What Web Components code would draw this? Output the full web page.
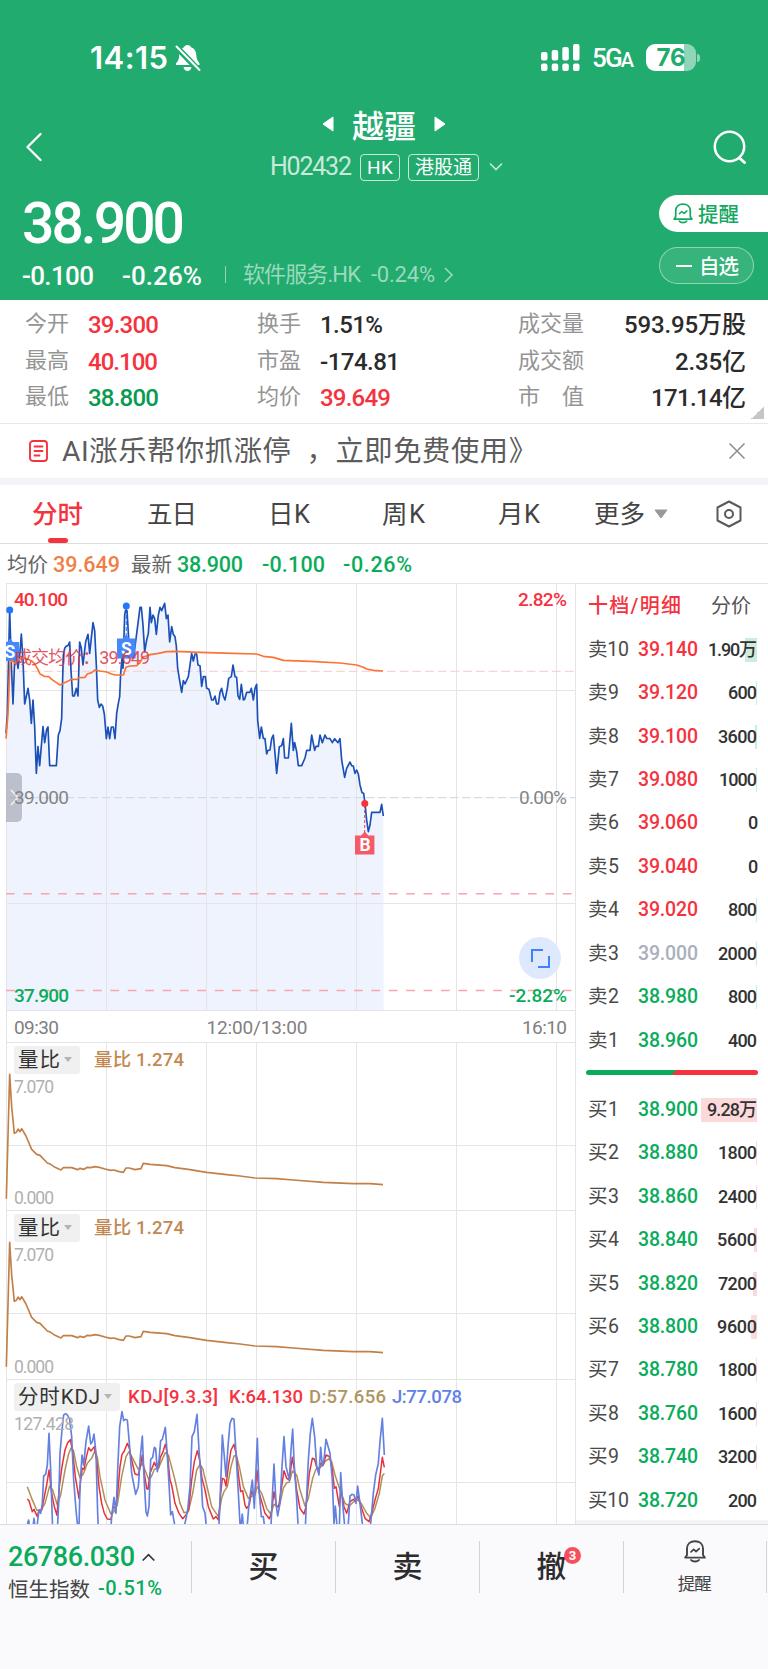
<!DOCTYPE html>
<html lang="zh-CN">
<head>
<meta charset="utf-8">
<title>越疆 H02432</title>
<style>
  body {
    margin: 0;
    width: 768px;
    height: 1669px;
    overflow: hidden;
    background: #fff;
    color: #333;
    font-family: Roboto, "Noto Sans CJK SC", sans-serif;
    --red: #f5333f;
    --green: #0aac5c;
    --line: #e4e4e6;
  }
  main { display: flex; height: 941px; }
</style>
</head>
<body>
<stock-header></stock-header>
<quote-stats></quote-stats>
<promo-banner>AI涨乐帮你抓涨停&nbsp; ，立即免费使用》</promo-banner>
<period-tabs></period-tabs>
<price-summary></price-summary>
<main>
  <stock-charts></stock-charts>
  <order-book></order-book>
</main>
<trade-bar></trade-bar>

<script>
/* base class: renders the html() of a component into an open shadow root */
class BaseElement extends HTMLElement {
  connectedCallback() {
    if (this.shadowRoot) return;
    this.attachShadow({ mode: 'open' });
    this.shadowRoot.innerHTML = this.html();
  }
}

/* bell with a small trend line inside, drawn in the current colour */
class BellIcon extends BaseElement {
  html() {
    return `
      <style>
        :host { display: block; width: 22px; height: 23px; }
        svg { display: block; width: 100%; height: 100%; }
      </style>
      <svg viewBox="0 0 22 23" fill="none" stroke="currentColor" stroke-width="1.9" stroke-linejoin="round" stroke-linecap="round">
        <path d="M1.2 17.6L3 15V8.6C3 4 6.4 1.2 11 1.2S19 4 19 8.6V15l1.8 2.6z"/>
        <path d="M7 20c1.6 2 6.4 2 8 0"/>
        <path d="M7 11.8l2.7-2.5 2.4 2.2 3.2-2.8" stroke-width="1.7"/>
      </svg>`;
  }
}
customElements.define('bell-icon', BellIcon);

class StatusBar extends BaseElement {
  html() {
    return `
      <style>
        :host { display: flex; align-items: center; height: 91px; padding: 12px 68px 0 90px; color: #fff; line-height: 1; }
        .time { font: 600 31px/1 Inter, sans-serif; }
        .bell { margin-left: 7px; margin-right: auto; }
        .net { font-size: 26px; font-weight: 500; margin-left: 12px; white-space: nowrap; }
        .net small { font-size: 20px; }
        .battery { display: flex; align-items: center; margin-left: 12px; }
        .level { width: 50px; height: 27px; border-radius: 9px; background: linear-gradient(90deg, #fff 38px, #90d5b7 38px); color: #21ab6e; font: 700 24px/27px Inter, sans-serif; text-align: center; }
        .nub { width: 3px; height: 8px; margin-left: 1px; border-radius: 0 3px 3px 0; background: #90d5b7; }
      </style>
      <fit-text class="time" width="78">14:15</fit-text>
      <svg class="bell" width="26" height="28" viewBox="0 0 26 28">
        <path d="M12.5 1c2 0 3 1 3.600 2.300 3.600 1.400 5 4.200 5.200 7.700.2 4.500 1.700 6 3.200 8.500V21H1v-1.500c2-2.500 3-4 3.200-8.500C4.500 7 6 4.700 8.900 3.300 9.500 2 10.500 1 12.500 1z" fill="#fff"/>
        <path d="M8.500 23h8c-.5 2.600-2 4-4 4s-3.500-1.400-4-4z" fill="#fff"/>
        <path d="M0 1.500L24.500 27" stroke="#21ab6e" stroke-width="6"/>
        <path d="M1.500 2.500L24.500 26" stroke="#fff" stroke-width="2" stroke-linecap="round"/>
      </svg>
      <svg width="39" height="28" viewBox="0 0 39 28" fill="#fff">
        <rect x="0" y="8" width="6.500" height="8.500" rx="2"/><rect x="10.700" y="6" width="6.500" height="10.500" rx="2"/>
        <rect x="21.300" y="3" width="6.500" height="13.500" rx="2"/><rect x="32" y="0" width="6.500" height="16.500" rx="2"/>
        <rect x="0" y="19.500" width="6.500" height="7.500" rx="2"/><rect x="10.700" y="19.500" width="6.500" height="7.500" rx="2"/>
        <rect x="21.300" y="19.500" width="6.500" height="7.500" rx="2"/><rect x="32" y="19.500" width="6.500" height="7.500" rx="2"/>
      </svg>
      <fit-text class="net" width="42">5G<small>A</small></fit-text>
      <div class="battery">
        <div class="level"><fit-text width="29">76</fit-text></div>
        <div class="nub"></div>
      </div>`;
  }
}
customElements.define('status-bar', StatusBar);

class StockHeader extends BaseElement {
  html() {
    return `
      <style>
        :host { display: block; height: 300px; background: #21ab6e; color: #fff; white-space: nowrap; }
        svg { display: block; }
        nav { display: flex; align-items: center; justify-content: space-between; height: 88px; padding: 0 21px 0 26px; }
        .name { display: flex; flex-direction: column; align-items: center; gap: 12px; padding: 4px 0 5px 18px; box-sizing: border-box; height: 88px; }
        .title { display: flex; align-items: center; gap: 18px; height: 34px; font: 500 32px/34px "Noto Sans CJK SC", sans-serif; margin-right: 5px; }
        .code { display: flex; align-items: center; height: 28px; font-size: 25px; line-height: 28px; }
        .code > :first-child { opacity: .75; }
        .tag { box-sizing: border-box; height: 27px; padding: 0 6px; border: 1.500px solid rgba(255,255,255,.75); border-radius: 4px; font-size: 19px; line-height: 25px; margin-left: 8px; }
        .quote { display: flex; justify-content: space-between; height: 109px; }
        .price { height: 64px; padding-left: 22px; font-size: 57px; font-weight: 500; line-height: 65px; }
        .change { display: flex; align-items: center; height: 41px; padding-left: 22px; font-size: 26px; font-weight: 500; line-height: 40px; }
        .sector { display: flex; align-items: center; margin-left: 23px; padding-left: 17px; height: 17px; border-left: 1px solid rgba(255,255,255,.5); font-size: 22px; font-weight: 400; color: #9bd9bd; margin-bottom: 2px; }
        .actions { display: flex; flex-direction: column; gap: 15px; padding-top: 4px; font-size: 20.500px; font-weight: 500; width: 109px; }
        .remind, .watch { display: flex; align-items: center; box-sizing: border-box; height: 37px; }
        .remind { background: #fff; color: #14a862; border-radius: 19px 0 0 19px; padding-left: 14px; }
        .remind bell-icon { width: 20px; height: 21px; margin-right: 5px; }
        .remind fit-text, .watch fit-text { margin-bottom: 1px; }
        .watch { width: 95px; border: 1.500px solid rgba(255,255,255,.45); background: rgba(255,255,255,.1); border-radius: 19px; padding-left: 16px; }
        .watch i { width: 16px; height: 2px; background: #fff; margin-right: 7px; }
      </style>
      <status-bar></status-bar>
      <nav>
        <svg width="16" height="30" viewBox="0 0 16 30" fill="none" stroke="#fff" stroke-width="2.300" stroke-linecap="round" stroke-linejoin="round"><path d="M14.500 2L1.500 15l13 13"/></svg>
        <div class="name">
          <div class="title">
            <svg width="12" height="16" viewBox="0 0 12 16"><path d="M11 1v14L1 8z" fill="#fff" stroke="#fff" stroke-linejoin="round"/></svg>
            <fit-text width="64">越疆</fit-text>
            <svg width="12" height="16" viewBox="0 0 12 16"><path d="M1 1v14l10-7z" fill="#fff" stroke="#fff" stroke-linejoin="round"/></svg>
          </div>
          <div class="code">
            <fit-text width="82">H02432</fit-text>
            <span class="tag"><fit-text width="26">HK</fit-text></span>
            <span class="tag"><fit-text width="57">港股通</fit-text></span>
            <svg style="margin-left:10px" width="14" height="10" viewBox="0 0 14 10" fill="none" stroke="#c8ebda" stroke-width="1.600"><path d="M1 1.500l6 6 6-6"/></svg>
          </div>
        </div>
        <svg width="34" height="34" viewBox="0 0 34 34" fill="none" stroke="#fff" stroke-width="2.500" stroke-linecap="round"><circle cx="16.500" cy="16.500" r="14.700"/><path d="M27 28.500l4.500 4" stroke-width="3"/></svg>
      </nav>
      <div class="quote">
        <div>
          <div class="price"><fit-text width="163">38.900</fit-text></div>
          <div class="change">
            <fit-text width="72">-0.100</fit-text>
            <fit-text width="80" style="margin-left:28px">-0.26%</fit-text>
            <div class="sector">
              <fit-text width="118">软件服务.HK</fit-text>
              <fit-text width="64" style="margin-left:10px">-0.24%</fit-text>
              <svg style="margin-left:9px" width="10" height="16" viewBox="0 0 10 16" fill="none" stroke="#9bd9bd" stroke-width="1.600"><path d="M1 1l7 7-7 7"/></svg>
            </div>
          </div>
        </div>
        <div class="actions">
          <div class="remind"><bell-icon></bell-icon><fit-text width="41">提醒</fit-text></div>
          <div class="watch"><i></i><fit-text width="40">自选</fit-text></div>
        </div>
      </div>`;
  }
}
customElements.define('stock-header', StockHeader);

/* label, label width, value, value width, colour */
const STATS = [
  [['今开', 44, '39.300', 71, 'up'], ['换手', 44, '1.51%', 63, ''], ['成交量', 66, '593.95万股', 122, '']],
  [['最高', 44, '40.100', 70, 'up'], ['市盈', 44, '-174.81', 80, ''], ['成交额', 66, '2.35亿', 71, '']],
  [['最低', 44, '38.800', 71, 'down'], ['均价', 44, '39.649', 71, 'up'], ['市　值', 66, '171.14亿', 95, '']],
];

class QuoteStats extends BaseElement {
  html() {
    const cells = STATS.flat().map(([label, lw, value, vw, tone]) => `
      <div class="cell">
        <fit-text class="label" width="${lw}">${label}</fit-text>
        <fit-text class="value ${tone}" width="${vw}">${value}</fit-text>
      </div>`).join('');
    return `
      <style>
        :host { display: grid; grid-template-columns: 232px 261px 228px; grid-auto-rows: 36.600px; box-sizing: border-box; height: 124px; padding: 7px 0 0 25px; border-bottom: 1px solid #e8e8ea; white-space: nowrap; position: relative; }
        .cell { display: flex; align-items: center; gap: 19px; font-size: 24px; line-height: 36px; }
        .cell:nth-of-type(3n) { justify-content: space-between; }
        .label { font-size: 22px; color: #949494; padding-bottom: 2px; }
        .value { font-weight: 500; color: #2b2b2b; }
        .up { color: var(--red); }
        .down { color: #089a50; }
        .corner { position: absolute; right: 4px; bottom: 4px; width: 13px; height: 13px; background: linear-gradient(135deg, transparent 50%, #c6c6c8 50%); }
      </style>
      ${cells}
      <span class="corner"></span>`;
  }
}
customElements.define('quote-stats', QuoteStats);

class PromoBanner extends BaseElement {
  html() {
    return `
      <style>
        :host { display: flex; align-items: center; height: 54px; padding: 0 23px 0 29px; border-bottom: 7px solid #f3f4f9; color: #5c5c5c; font-size: 28.300px; line-height: 54px; white-space: nowrap; }
        fit-text { margin: 2px auto 0 14px; }
      </style>
      <svg width="19" height="22" viewBox="0 0 19 22" fill="none" stroke="#f5333f" stroke-width="1.900" stroke-linecap="round"><rect x="1" y="1" width="17" height="20" rx="3"/><path d="M5.500 6.500h8M5.500 11h8M5.500 15.500h5"/></svg>
      <fit-text width="475"><slot></slot></fit-text>
      <svg width="16" height="16" viewBox="0 0 16 16" stroke="#8c8c8c" stroke-width="1.500"><path d="M.5.5l15 15M15.500.5l-15 15"/></svg>`;
  }
}
customElements.define('promo-banner', PromoBanner);

/* tab text, width, space before it */
const TABS = [['分时', 51, 32], ['五日', 50, 64], ['日K', 42, 71], ['周K', 43, 72], ['月K', 42, 73], ['更多', 51, 54]];

class PeriodTabs extends BaseElement {
  html() {
    return `
      <style>
        :host { display: flex; align-items: center; height: 58px; border-bottom: 1px solid #dedee0; font-size: 25.500px; line-height: 58px; white-space: nowrap; color: #444; }
        .tab { display: flex; flex-direction: column; align-items: center; height: 58px; }
        .active { color: var(--red); font-weight: 500; }
        .active::after { content: ""; width: 20px; height: 5px; border-radius: 3px; background: var(--red); margin-top: -5px; }
      </style>
      ${TABS.map(([text, width, gap], i) => `<div class="tab${i ? '' : ' active'}" style="margin-left:${gap}px"><fit-text width="${width}">${text}</fit-text></div>`).join('')}
      <svg style="margin-left:9px" width="14" height="10" viewBox="0 0 14 10"><path d="M1 1h12L7 9z" fill="#999" stroke="#999" stroke-linejoin="round"/></svg>
      <svg style="margin-left:48px" width="26" height="28" viewBox="0 0 26 28" fill="none" stroke="#5a5a5a" stroke-width="2" stroke-linejoin="round"><path d="M13 1.500L24.500 7.500v13L13 26.500 1.500 20.500v-13z"/><circle cx="13" cy="14" r="4"/></svg>`;
  }
}
customElements.define('period-tabs', PeriodTabs);

class PriceSummary extends BaseElement {
  html() {
    return `
      <style>
        :host { display: flex; align-items: center; height: 39px; padding: 3px 0 0 7px; box-sizing: border-box; font-size: 21.500px; font-weight: 500; line-height: 36px; color: var(--green); white-space: nowrap; }
        .label { font-size: 20.500px; font-weight: 400; color: #666; margin-bottom: 1px; }
        .avg { color: #ef7f45; }
      </style>
      <fit-text class="label" width="41">均价</fit-text>
      <fit-text class="avg" width="67" style="margin-left:5px">39.649</fit-text>
      <fit-text class="label" width="41" style="margin-left:11px">最新</fit-text>
      <fit-text width="66" style="margin-left:5px">38.900</fit-text>
      <fit-text width="63" style="margin-left:19px">-0.100</fit-text>
      <fit-text width="69" style="margin-left:18px">-0.26%</fit-text>`;
  }
}
customElements.define('price-summary', PriceSummary);

/* series are kept in thirds of a pixel, y counted from the top given with each */
const PRICE = '18,460 22,400 29,90 34,250 39,372 44,240 49,225 54,265 60,215 64,162 69,240 74,372 84,325 89,360 94,430 99,360 104,440 109,580 114,500 119,557 129,440 134,488 140,448 144,441 149,557 169,557 175,465 180,452 185,415 187,330 190,225 194,205 199,198 204,197 209,186 213,270 218,348 223,348 229,325 234,348 239,186 244,205 249,255 257,185 264,163 269,220 279,128 284,152 289,255 293,360 298,382 303,372 308,378 313,402 319,476 324,441 329,476 334,441 340,441 345,476 350,400 355,370 359,350 362,280 366,235 369,265 374,105 377,90 381,92 386,175 390,220 398,225 405,200 412,145 420,82 424,82 429,135 434,215 440,180 445,160 450,82 454,128 459,105 464,116 469,163 475,105 480,82 485,92 494,70 499,116 504,105 509,186 515,140 520,163 525,170 529,198 533,265 540,308 545,337 550,302 555,312 565,290 575,220 580,243 585,222 590,222 594,255 600,257 605,319 610,290 616,290 620,325 627,328 635,360 640,360 645,348 650,372 655,372 660,337 665,325 670,348 675,360 682,325 686,295 694,290 699,255 705,290 710,292 714,348 719,358 724,313 730,360 734,358 740,337 750,337 754,325 760,360 765,325 770,313 773,420 779,475 784,441 790,475 795,476 800,522 804,511 810,510 815,476 820,465 825,520 830,580 838,500 845,497 850,476 854,534 865,534 874,430 880,511 884,488 890,515 895,557 905,557 915,534 920,511 930,511 935,465 944,511 948,499 955,499 960,465 967,488 975,465 980,475 990,476 997,488 1004,476 1014,488 1020,476 1025,540 1034,592 1040,565 1050,546 1055,557 1060,558 1065,580 1070,570 1075,582 1080,615 1086,638 1091,640 1095,670 1100,720 1105,755 1110,735 1115,697 1140,697 1145,673 1150,708';
const AVERAGE = '18,476 24,400 30,250 35,240 45,250 55,240 65,233 85,238 95,243 103,250 112,265 120,282 133,289 146,290 155,298 165,305 180,315 190,310 200,305 215,298 230,298 238,293 255,292 262,282 275,278 285,270 300,273 320,276 335,282 345,285 370,285 378,262 390,258 410,257 420,248 428,232 450,224 475,220 500,215 525,214 600,217 700,220 770,222 790,229 820,232 850,241 930,244 1020,249 1070,255 1090,262 1100,267 1120,271 1149,273';
const VOLUME_RATIO = '19,476 29,103 35,200 43,280 49,277 54,267 60,275 65,266 78,288 95,328 110,343 120,346 142,369 152,373 165,382 183,390 190,383 215,383 233,389 240,385 252,388 262,382 272,383 285,380 298,382 315,387 332,391 342,390 355,394 370,397 378,384 388,384 405,389 423,386 430,370 450,373 500,377 525,383 570,389 620,397 680,404 720,408 765,414 830,416 880,420 970,427 1060,431 1110,431 1149,434';
const KDJ_J = '82,461 86,450 90,480 98,480 102,445 107,490 112,461 117,420 122,430 127,400 131,318 137,313 142,285 147,190 152,300 158,480 165,500 172,480 176,400 180,250 186,180 191,135 197,131 203,136 209,148 215,200 221,330 228,420 234,480 237,470 240,350 246,255 251,285 258,215 266,168 272,222 277,215 282,192 288,250 293,430 297,520 330,520 335,440 342,382 348,430 353,300 359,170 366,125 371,152 376,148 382,150 388,220 395,310 407,373 415,350 421,260 427,198 432,320 438,425 442,438 447,410 452,268 458,262 463,232 467,235 472,305 477,270 482,212 487,208 496,172 502,260 507,340 512,435 517,425 525,470 540,500 555,460 563,420 570,350 576,200 583,185 591,133 597,240 603,320 608,410 615,430 622,500 655,500 659,420 664,290 667,195 673,260 678,320 684,230 690,160 696,145 702,148 708,250 714,350 721,480 727,432 732,490 740,490 747,400 757,330 763,415 768,300 772,205 777,360 784,440 790,440 795,480 812,490 817,380 822,282 828,400 833,438 840,400 846,290 852,200 858,290 868,330 873,240 878,177 883,290 889,370 894,461 900,500 915,500 919,400 925,270 931,190 937,145 944,200 950,290 957,315 962,232 967,288 972,270 978,208 990,250 997,330 1002,461 1006,408 1012,480 1018,480 1022,308 1028,400 1035,480 1045,461 1050,378 1056,373 1062,375 1068,400 1073,348 1080,400 1087,461 1095,500 1112,461 1120,370 1127,315 1135,280 1140,215 1147,145 1153,255';
const KDJ_K = '82,387 87,392 97,425 102,418 112,440 117,420 125,420 133,380 140,345 147,300 155,370 163,410 171,436 178,350 186,290 195,240 203,218 211,209 218,245 226,320 237,385 242,330 247,295 252,298 258,265 266,233 273,243 283,230 290,270 297,350 305,400 313,430 322,447 333,448 340,410 347,415 353,370 360,290 366,253 373,243 382,220 388,235 395,270 405,312 415,315 421,290 427,255 433,310 440,355 444,358 450,310 456,295 463,277 469,290 475,295 481,262 488,248 496,223 502,250 510,330 515,345 525,400 537,430 548,446 558,435 566,420 575,330 583,275 592,242 600,275 606,325 614,355 625,410 640,447 648,440 656,450 662,370 667,325 673,328 678,348 685,290 693,240 702,223 709,255 716,320 722,365 728,362 735,405 740,415 748,405 755,362 760,375 765,370 771,300 778,370 785,395 795,430 808,446 814,430 822,365 830,410 836,410 845,350 852,302 860,325 868,330 877,262 883,300 890,360 900,415 912,432 918,410 928,310 937,265 943,267 950,290 956,300 962,280 970,285 978,255 985,258 990,262 997,300 1003,355 1008,350 1018,410 1023,360 1032,410 1040,430 1050,395 1060,388 1067,393 1074,378 1085,415 1095,445 1107,455 1115,430 1125,390 1135,355 1141,310 1147,262 1153,292';
const KDJ_D = '82,350 95,385 110,420 122,423 135,400 143,370 149,348 158,360 172,405 182,375 195,300 205,255 213,234 220,240 230,290 240,323 250,312 262,280 275,265 285,242 292,262 300,320 315,390 333,433 342,425 352,405 365,320 378,260 387,245 398,265 415,298 427,280 437,305 447,330 455,318 463,298 475,295 485,272 496,248 505,255 512,280 525,330 540,400 552,428 565,425 578,370 590,300 600,283 608,295 620,345 635,410 655,440 665,385 672,365 682,350 693,290 702,258 709,256 718,290 730,350 745,385 757,378 765,375 772,350 785,370 800,415 812,432 822,403 832,410 840,400 850,355 860,338 868,337 877,303 890,315 900,360 915,408 925,385 938,325 948,297 960,293 975,275 987,266 995,275 1005,315 1020,360 1035,400 1048,408 1060,396 1074,390 1085,402 1100,430 1112,443 1125,415 1138,370 1147,318 1153,310';

const GRID_X = [106.5, 206.5, 256.5, 356.5, 456.5, 556.5];

/* frame and grid lines shared by all plots */
function grid(height, rows) {
  const v = GRID_X.map(x => `M${x} 0V${height}`).join('');
  const h = rows.map(y => `M6 ${y}H576`).join('');
  return `<path d="${v}${h}M6 .5H576M6.500 0V${height}" stroke="#e5e5e7" fill="none"/>`;
}

function series(points, color, top, width = 5) {
  return `<polyline transform="translate(0 ${top}) scale(.33333)" points="${points}" fill="none" stroke="${color}" stroke-width="${width}" stroke-linejoin="round"/>`;
}

class PriceChart extends BaseElement {
  html() {
    return `
      <style>
        :host { display: grid; height: 427px; font-size: 19px; line-height: 20px; }
        :host > * { grid-area: 1 / 1; }
        svg { display: block; }
        .axis { display: flex; flex-direction: column; justify-content: space-between; padding: 7px 9px 4px 14px; z-index: 1; }
        .axis div { display: flex; justify-content: space-between; }
        .hi { color: var(--red); font-weight: 500; }
        .mid { color: #858585; }
        .lo { color: var(--green); font-weight: 500; }
        .cost { position: absolute; left: 14px; top: 648px; font-size: 18px; color: #dc3848; opacity: .85; }
        .expand { position: absolute; left: 519px; top: 937px; width: 42px; height: 42px; border-radius: 50%; background: #dfe9fe; }
        .drawer { position: absolute; left: 6px; top: 773px; width: 16px; height: 49px; border-radius: 0 5px 5px 0; background: rgba(160,165,177,.65); }
      </style>
      <svg width="576" height="427" viewBox="0 0 576 427">
        <polygon transform="translate(0 -3) scale(.33333)" points="${PRICE} 1151,1290 18,1290" fill="#eff3fe"/>
        ${grid(427, [107.5, 320.5])}
        <path d="M6 214.700H576" stroke="#d2dde8" stroke-width="1.300" stroke-dasharray="8.500 3.500"/>
        <path d="M6 88.300H576" stroke="#f8d3d7" stroke-width="1.300" stroke-dasharray="8.700 4"/>
        <path d="M6 310.700H576M6 407.500H576" stroke="#f6a6ac" stroke-width="1.600" stroke-dasharray="8.700 8.700"/>
        <g stroke="#2a7bf6" stroke-dasharray="4 2"><path d="M9.700 30V58M126.300 26V54"/></g>
        ${series(PRICE, '#1a50b8', -3)}
        <circle cx="9.700" cy="27" r="3.500" fill="#2277fb"/>
        <circle cx="126.300" cy="23" r="3.500" fill="#2277fb"/>
        <g fill="#4488fa"><path d="M6 59h1l3-3.500 3 3.500h6v19H6z"/><path d="M117 55.500h6l3.300-4 3.300 4h6v20H117z"/></g>
        <path d="M364.700 222v30" stroke="#f03846" stroke-dasharray="3 2"/>
        <circle cx="364.800" cy="220.500" r="3.500" fill="#f5333f"/>
        <path d="M355 252.500h6l3.700-4 3.700 4h6v19H355z" fill="#f65a68"/>
        <g fill="#fff" font-weight="700" font-size="17.500" text-anchor="middle"><text x="10" y="74.500">S</text><text x="126.300" y="71.500">S</text><text x="365" y="268">B</text></g>
        ${series(AVERAGE, '#fb7436', -3)}
      </svg>
      <div class="axis">
        <div class="hi"><fit-text width="54">40.100</fit-text><fit-text width="49">2.82%</fit-text></div>
        <div class="mid"><fit-text width="55">39.000</fit-text><fit-text width="48">0.00%</fit-text></div>
        <div class="lo"><fit-text width="55">37.900</fit-text><fit-text width="58">-2.82%</fit-text></div>
      </div>
      <fit-text class="cost" width="136">成交均价：39.649</fit-text>
      <svg class="expand" viewBox="0 0 42 42" fill="none" stroke="#3f83f8" stroke-width="2"><path d="M24 13H13v12M30 19v11H19"/></svg>
      <svg class="drawer" viewBox="0 0 16 49" fill="none" stroke="#f2f4f8" stroke-width="1.500"><path d="M5 17l7 7.500L5 32"/></svg>`;
  }
}
customElements.define('price-chart', PriceChart);

/* one indicator under the price chart: name box and legend over a plot */
class IndicatorPanel extends BaseElement {
  html() {
    const kdj = this.getAttribute('type') === 'kdj';
    const height = Number(this.getAttribute('height'));
    const plot = kdj
      ? grid(height, [103.5]) + series(KDJ_D, '#ae9158', -9, 4.5) + series(KDJ_K, '#ea3036', -9, 4.5) + series(KDJ_J, '#6581e0', -9, 5)
      : grid(height, [103.5]) + series(VOLUME_RATIO, '#c28048', -2, 5);
    const legend = kdj
      ? `<div class="box"><fit-text width="82">分时KDJ</fit-text><i></i></div>
         <fit-text style="color:#f5333f;margin-left:8px" width="90">KDJ[9.3.3]</fit-text>
         <fit-text style="color:#f5333f;margin-left:11px" width="74">K:64.130</fit-text>
         <fit-text style="color:#b09460;margin-left:6px" width="77">D:57.656</fit-text>
         <fit-text style="color:#607fe6;margin-left:6px" width="70">J:77.078</fit-text>`
      : `<div class="box"><fit-text width="42">量比</fit-text><i></i></div>
         <fit-text style="margin-left:14px" width="90">量比 1.274</fit-text>`;
    return `
      <style>
        :host { display: grid; height: ${height}px; overflow: hidden; }
        :host > * { grid-area: 1 / 1; }
        svg { display: block; }
        .over { display: flex; flex-direction: column; align-items: flex-start; box-sizing: border-box; height: ${height}px; padding: 4px 0 2px 14px; font-size: 17.500px; line-height: 20px; color: #b0b0b0; }
        .legend { display: flex; align-items: center; height: 27px; margin-bottom: 4px; font-size: 18.500px; font-weight: 500; color: #c28850; white-space: nowrap; }
        .box { display: flex; align-items: center; box-sizing: border-box; height: 28px; padding: 0 8px 0 4px; border-radius: 3px; background: #f0f0f0; color: #333; font-size: 20.500px; font-weight: 400; }
        i { margin-left: 4px; border: 4.500px solid transparent; border-top: 5px solid #b4b4b4; border-bottom: 0; }
        .min { margin-top: auto; }
      </style>
      <svg width="576" height="${height}" viewBox="0 0 576 ${height}">${plot}</svg>
      <div class="over">
        <div class="legend">${legend}</div>
        ${kdj ? '<fit-text width="60">127.428</fit-text>' : '<fit-text width="40">7.070</fit-text><fit-text class="min" width="40">0.000</fit-text>'}
      </div>`;
  }
}
customElements.define('indicator-panel', IndicatorPanel);

class StockCharts extends BaseElement {
  html() {
    return `
      <style>
        :host { display: block; box-sizing: border-box; width: 576px; border-right: 1px solid var(--line); }
        .times { display: flex; justify-content: space-between; align-items: center; box-sizing: border-box; height: 32px; margin-left: 6px; padding: 2px 8px 0 7px; border: solid var(--line); border-width: 1px 0 0 1px; font-size: 19px; color: #808080; }
        .times :nth-child(2) { margin-right: 67px; }
      </style>
      <price-chart></price-chart>
      <div class="times"><fit-text width="45">09:30</fit-text><fit-text width="101">12:00/13:00</fit-text><fit-text width="45">16:10</fit-text></div>
      <indicator-panel height="168"></indicator-panel>
      <indicator-panel height="169"></indicator-panel>
      <indicator-panel type="kdj" height="145"></indicator-panel>`;
  }
}
customElements.define('stock-charts', StockCharts);

/* price, quantity, quantity text width, depth bar width */
const ASKS = [
  ['39.140', '1.90万', 49, 12], ['39.120', '600', 29, 1], ['39.100', '3600', 39, 2], ['39.080', '1000', 38, 1], ['39.060', '0', 9, 0],
  ['39.040', '0', 9, 0], ['39.020', '800', 29, 1], ['39.000', '2000', 39, 1.5], ['38.980', '800', 29, 1], ['38.960', '400', 29, 0],
];
const BIDS = [
  ['38.900', '9.28万', 50, 56], ['38.880', '1800', 39, 1], ['38.860', '2400', 39, 1], ['38.840', '5600', 40, 3], ['38.820', '7200', 39, 4],
  ['38.800', '9600', 40, 6], ['38.780', '1800', 39, 1], ['38.760', '1600', 39, 1], ['38.740', '3200', 39, 1], ['38.720', '200', 29, 0],
];

class OrderBook extends BaseElement {
  row(side, level, [price, qty, width, bar]) {
    const tone = price === '39.000' ? 'flat' : price > '39.000' ? 'up' : 'down';
    const tint = side === '卖' ? '#cfebdd' : '#fcdadc';
    return `
      <div class="row">
        <fit-text class="level" width="${level > 9 ? 41 : 31}">${side}${level}</fit-text>
        <fit-text class="price ${tone}" width="60">${price}</fit-text>
        <span class="qty" style="background:linear-gradient(${tint},${tint}) right center / ${bar}px 24px no-repeat"><fit-text width="${width}">${qty}</fit-text></span>
      </div>`;
  }
  html() {
    return `
      <style>
        :host { display: block; box-sizing: border-box; width: 192px; height: 941px; border-top: 1px solid var(--line); border-bottom: 4px solid #f2f4f8; padding: 0 10px; white-space: nowrap; }
        .head { display: flex; justify-content: space-between; align-items: center; box-sizing: border-box; height: 44px; padding: 0 7px 3px 2px; font-size: 20px; color: #555; }
        .head fit-text:first-of-type { color: var(--red); font-weight: 500; }
        .row { display: grid; grid-template-columns: 50px 60px 1fr; align-items: center; height: 43.430px; padding: 0 1px 0 2px; font-size: 19.500px; line-height: 24px; }
        .level { color: #4a4a4a; }
        .price { font-weight: 500; }
        .qty { font-size: 18px; font-weight: 500; text-align: right; color: #333; margin-left: -20px; height: 24px; }
        .up { color: var(--red); } .down { color: var(--green); } .flat { color: #a9b0bc; }
        .ratio { height: 5px; margin: 8px 0 13px; border-radius: 3px; background: linear-gradient(135deg, var(--green) 51%, var(--red) 51%); }
      </style>
      <div class="head"><fit-text width="93">十档/明细</fit-text><fit-text width="40">分价</fit-text></div>
      ${ASKS.map((r, i) => this.row('卖', 10 - i, r)).join('')}
      <div class="ratio"></div>
      ${BIDS.map((r, i) => this.row('买', i + 1, r)).join('')}`;
  }
}
customElements.define('order-book', OrderBook);

class TradeBar extends BaseElement {
  html() {
    return `
      <style>
        :host { display: flex; box-sizing: border-box; height: 145px; padding-top: 16px; border-top: 1px solid #dcdce0; background: #fafafc; white-space: nowrap; }
        .index { width: 191px; box-sizing: border-box; padding-left: 8px; color: var(--green); font-weight: 500; }
        .top { display: flex; align-items: center; height: 32px; font-size: 27px; }
        .bottom { display: flex; align-items: center; height: 30px; font-size: 20px; }
        .bottom :first-child { color: #444; font-weight: 400; font-size: 20.500px; margin-right: 8px; }
        .item { display: flex; flex-direction: column; align-items: center; justify-content: center; box-sizing: border-box; width: 144px; height: 52px; border-left: 1px solid #d4d4d6; color: #2c2c2c; font: 500 30px/52px Roboto, "Noto Sans CJK SC", sans-serif; }
        .item:last-child { width: 143.500px; border-right: 1px solid #d4d4d6; font-size: 17.500px; font-weight: 400; line-height: 20px; gap: 11px; color: #444; }
        .cancel { position: relative; }
        b { position: absolute; left: 84px; top: 6px; width: 17px; height: 17px; border-radius: 50%; background: #f6505c; color: #fff; font-size: 13px; line-height: 17px; text-align: center; }
      </style>
      <div class="index">
        <div class="top"><fit-text width="127">26786.030</fit-text><svg style="margin-left:7px" width="13" height="9" viewBox="0 0 13 9" fill="none" stroke="#333" stroke-width="1.700"><path d="M.7 7.500l5.800-5.800 5.800 5.800"/></svg></div>
        <div class="bottom"><fit-text width="82">恒生指数</fit-text><fit-text width="64">-0.51%</fit-text></div>
      </div>
      <div class="item">买</div>
      <div class="item">卖</div>
      <div class="item cancel">撤<b>3</b></div>
      <div class="item"><bell-icon></bell-icon><fit-text width="34">提醒</fit-text></div>`;
  }
}
customElements.define('trade-bar', TradeBar);

/* fit-text spreads its letters so that the text is exactly as wide as its width attribute.
   Defined last, so that every host has its fonts when the text is measured. */
class FitText extends HTMLElement {
  connectedCallback() {
    if (this.shadowRoot) return;
    this.attachShadow({ mode: 'open' });
    this.shadowRoot.innerHTML = `
      <style>
        :host { display: inline-block; flex: none; white-space: nowrap; text-align: left; }
        span { display: inline-block; }
      </style>
      <span><slot></slot></span>`;
    const span = this.shadowRoot.querySelector('span');
    const width = Number(this.getAttribute('width'));
    const slotted = this.querySelector('slot');
    const text = slotted ? slotted.assignedNodes().map(n => n.textContent).join('') : this.textContent;
    const natural = span.getBoundingClientRect().width;
    const spacing = text.length > 1 ? (width - natural) / (text.length - 1) : 0;
    span.style.letterSpacing = `${spacing}px`;
    span.style.marginRight = `${-spacing}px`;
    this.style.width = `${width}px`;
  }
}
customElements.define('fit-text', FitText);
</script>
</body>
</html>
